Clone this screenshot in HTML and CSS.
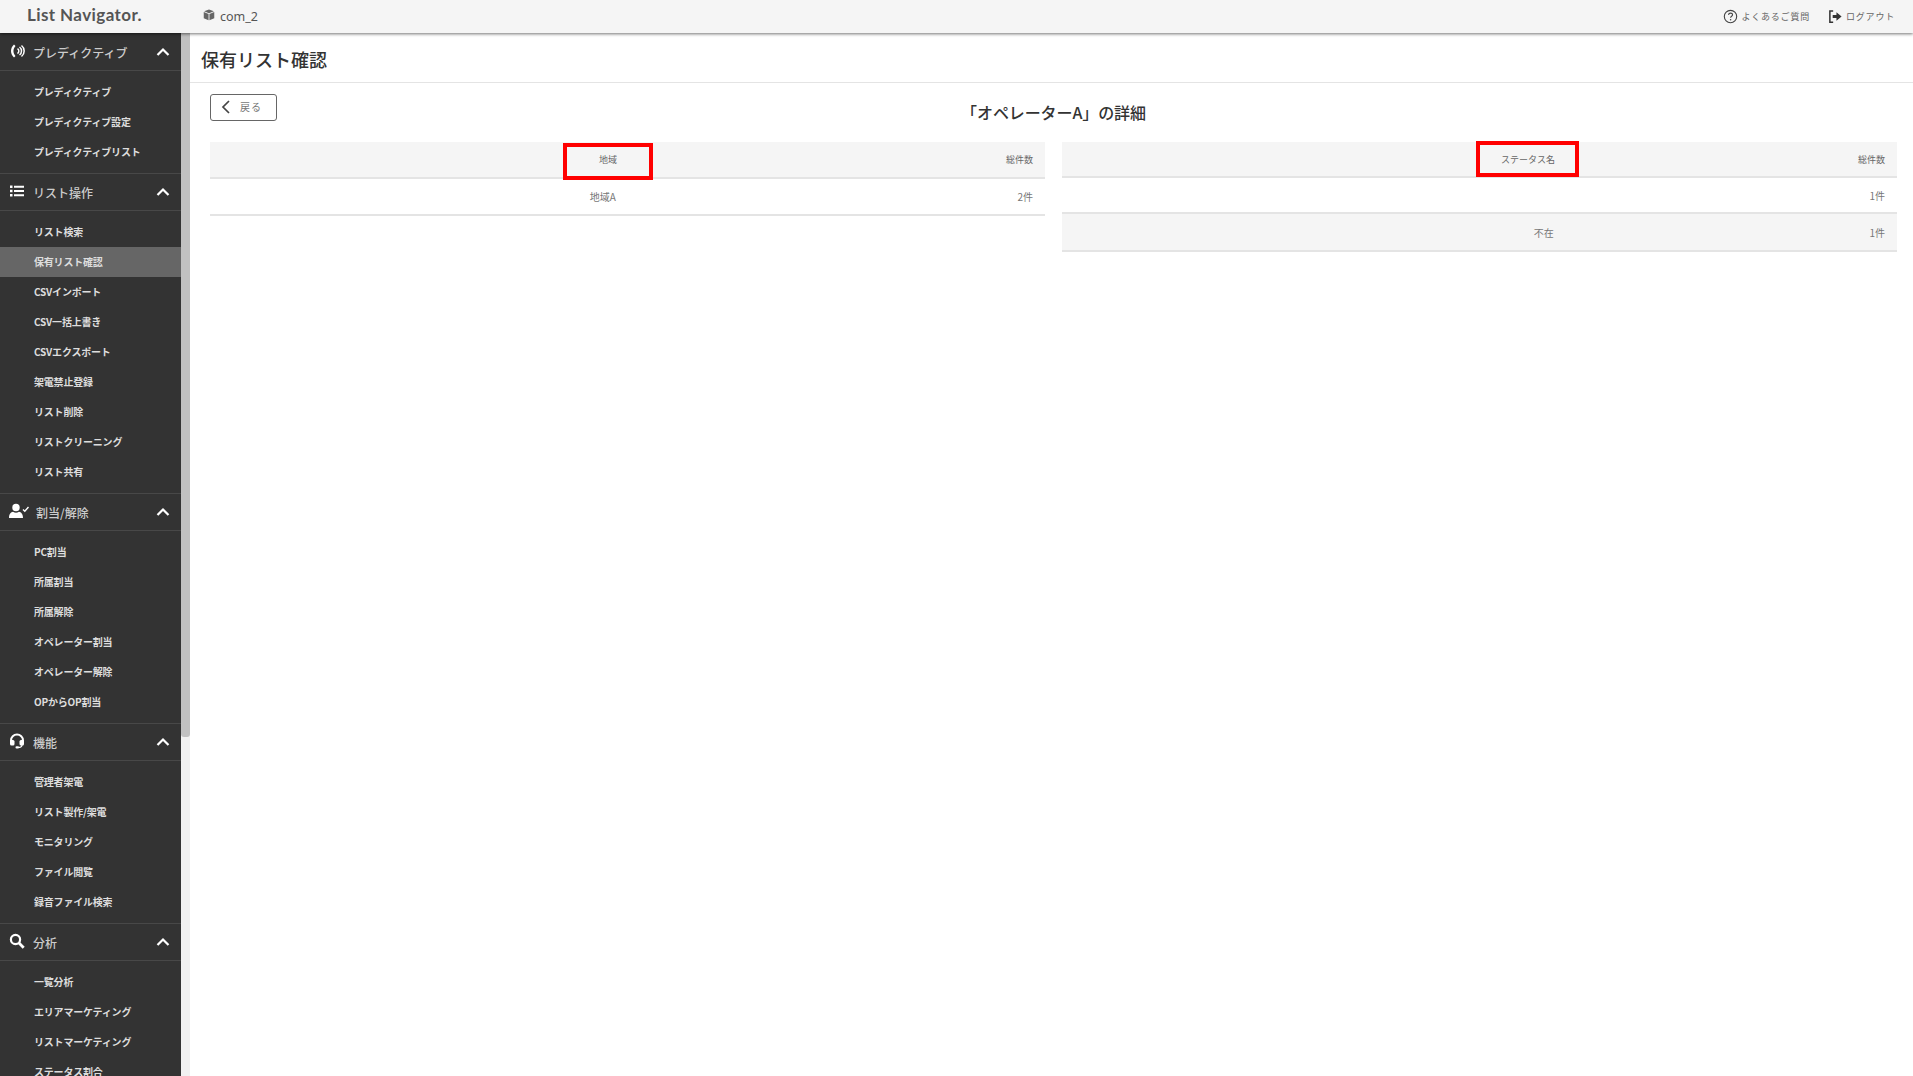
FILE: index.html
```html
<!DOCTYPE html>
<html lang="ja">
<head>
<meta charset="utf-8">
<title>保有リスト確認</title>
<link rel="stylesheet" href="styles.css">
</head>
<body>
<header class="topbar">
  <div class="logo">List Navigator.</div>
  <div class="company">
    <svg class="cube" viewBox="0 0 16 16"><path d="M8 .5 14.500 3 8 5.600 1.500 3zM1 4l6.400 2.600V15L1 12.200zM15 4 8.600 6.600V15l6.400-2.800z"/></svg>
    <span>com_2</span>
  </div>
  <nav class="toplinks">
    <a class="toplink"><svg class="topicon" viewBox="0 0 16 16"><circle cx="8" cy="8" r="6.600" fill="none" stroke="#444" stroke-width="1.200"/><path d="M5.900 6.300C6 5 7 4.400 8.100 4.400c1.200 0 2.100.8 2.100 1.800 0 1.600-2.100 1.500-2.100 3.200" fill="none" stroke="#444" stroke-width="1.200"/><circle cx="8.100" cy="11.400" r=".8" fill="#444"/></svg>よくあるご質問</a>
    <a class="toplink"><svg class="topicon" viewBox="0 0 16 16"><path d="M5.500 2H2v12h3.500" fill="none" stroke="#333" stroke-width="1.600"/><path d="M5 6.500h4V3.500L14.500 8 9 12.500v-3H5z" fill="#333"/></svg>ログアウト</a>
  </nav>
</header>
<div class="shell">
  <aside class="sidebar">
    <div class="sidebar-inner">
      <section class="group">
        <h2 class="group-head"><svg class="gicon" viewBox="0 0 16 16"><path d="M5 1.500C1 5 1 11 5 14.500L6.500 13C3.800 10 3.800 6 6.500 3z" fill="#fff"/><path d="M8.500 5.500a3 3 0 0 1 0 5M10.500 4a5 5 0 0 1 0 8M12.500 2.500a7 7 0 0 1 0 11" fill="none" stroke="#fff" stroke-width="1.500"/></svg><span class="gtitle">プレディクティブ</span><svg class="chev" viewBox="0 0 14 10"><path d="M1.500 8 7 2.500 12.500 8" fill="none" stroke="#fff" stroke-width="2.200"/></svg></h2>
        <ul class="items"><li>プレディクティブ</li><li>プレディクティブ設定</li><li>プレディクティブリスト</li></ul>
      </section>
      <section class="group">
        <h2 class="group-head"><svg class="gicon" viewBox="0 0 16 16"><path d="M1 2.500h2.500v2.600H1zM1 6.700h2.500v2.600H1zM1 10.900h2.500v2.600H1zM5 2.800h10v2H5zM5 7h10v2H5zM5 11.200h10v2H5z" fill="#fff"/></svg><span class="gtitle">リスト操作</span><svg class="chev" viewBox="0 0 14 10"><path d="M1.500 8 7 2.500 12.500 8" fill="none" stroke="#fff" stroke-width="2.200"/></svg></h2>
        <ul class="items"><li>リスト検索</li><li class="active">保有リスト確認</li><li>CSVインポート</li><li>CSV一括上書き</li><li>CSVエクスポート</li><li>架電禁止登録</li><li>リスト削除</li><li>リストクリーニング</li><li>リスト共有</li></ul>
      </section>
      <section class="group">
        <h2 class="group-head"><svg class="gicon gicon-wide" viewBox="0 0 20 16"><circle cx="7" cy="4.500" r="3.700" fill="#fff"/><path d="M0 15c0-4 2-6 4-6.200 2 1.200 4 1.200 6 0 2 .2 4 2.200 4 6.200z" fill="#fff"/><path d="M14 6.500l1.800 1.800L19.500 4" fill="none" stroke="#fff" stroke-width="1.400"/></svg><span class="gtitle">割当/解除</span><svg class="chev" viewBox="0 0 14 10"><path d="M1.500 8 7 2.500 12.500 8" fill="none" stroke="#fff" stroke-width="2.200"/></svg></h2>
        <ul class="items"><li>PC割当</li><li>所属割当</li><li>所属解除</li><li>オペレーター割当</li><li>オペレーター解除</li><li>OPからOP割当</li></ul>
      </section>
      <section class="group">
        <h2 class="group-head"><svg class="gicon" viewBox="0 0 16 16"><path d="M2 9V7.500a6 6 0 0 1 12 0V9" fill="none" stroke="#fff" stroke-width="2"/><rect x="1" y="7" width="4.500" height="5.500" rx="1.500" fill="#fff"/><rect x="10.500" y="7" width="4.500" height="5.500" rx="1.500" fill="#fff"/><path d="M13 12c0 2-2 2.500-4 2.500" fill="none" stroke="#fff" stroke-width="1.200"/><rect x="6.500" y="13.300" width="3.500" height="2.200" rx="1" fill="#fff"/></svg><span class="gtitle">機能</span><svg class="chev" viewBox="0 0 14 10"><path d="M1.500 8 7 2.500 12.500 8" fill="none" stroke="#fff" stroke-width="2.200"/></svg></h2>
        <ul class="items"><li>管理者架電</li><li>リスト製作/架電</li><li>モニタリング</li><li>ファイル閲覧</li><li>録音ファイル検索</li></ul>
      </section>
      <section class="group">
        <h2 class="group-head"><svg class="gicon" viewBox="0 0 16 16"><circle cx="6.500" cy="6.500" r="4.600" fill="none" stroke="#fff" stroke-width="2.200"/><path d="M10 10l4.700 4.700" stroke="#fff" stroke-width="2.800"/></svg><span class="gtitle">分析</span><svg class="chev" viewBox="0 0 14 10"><path d="M1.500 8 7 2.500 12.500 8" fill="none" stroke="#fff" stroke-width="2.200"/></svg></h2>
        <ul class="items"><li>一覧分析</li><li>エリアマーケティング</li><li>リストマーケティング</li><li>ステータス割合</li></ul>
      </section>
    </div>
    <div class="rail"><div class="thumb"></div></div>
  </aside>
  <main class="main">
    <h1 class="page-title">保有リスト確認</h1>
    <div class="content">
      <div class="toolbar">
        <button class="back"><svg class="back-icon" viewBox="0 0 10 14"><path d="M8 1 2 7 8 13" fill="none" stroke="#444" stroke-width="1.700"/></svg><span>戻る</span></button>
      </div>
      <h2 class="detail-title">「オペレーターA」の詳細</h2>
      <div class="tables">
        <div class="table table-left">
          <div class="row head"><div class="cell name"><span>地域</span></div><div class="cell total">総件数</div></div>
          <div class="row"><div class="cell name"><span class="shift-b">地域A</span></div><div class="cell total">2件</div></div>
          <div class="mark mark-left"></div>
        </div>
        <div class="table table-right">
          <div class="row head"><div class="cell name"><span class="shift-c">ステータス名</span></div><div class="cell total">総件数</div></div>
          <div class="row"><div class="cell name"></div><div class="cell total">1件</div></div>
          <div class="row alt"><div class="cell name"><span class="shift-d">不在</span></div><div class="cell total">1件</div></div>
          <div class="mark mark-right"></div>
        </div>
      </div>
    </div>
  </main>
</div>
</body>
</html>
```
FILE: styles.css
```css
* { box-sizing: border-box; }
html, body { margin: 0; height: 100%; overflow: hidden; }
body {
  font-family: "Noto Sans CJK JP", "Noto Sans", sans-serif;
  color: #444;
  background: #fff;
  display: flex;
  flex-direction: column;
}
.topbar {
  flex: none;
  height: 33px;
  background: #f5f5f5;
  display: flex;
  align-items: center;
  box-shadow: 0 1px 3px rgba(0,0,0,.55);
  position: relative;
  z-index: 2;
}
.logo {
  font-family: Lato, sans-serif;
  font-size: 17px;
  font-weight: 700;
  letter-spacing: .4px;
  color: #555;
  margin-left: 27px;
  width: 176px;
  line-height: 30px;
  height: 33px;
}
.company { display: flex; align-items: center; gap: 5px; font-size: 12.5px; color: #555; height: 33px; font-family: "Noto Sans", sans-serif; }
.cube { width: 12px; height: 12px; fill: #666; margin-top: -3px; }
.toplinks { margin-left: auto; display: flex; gap: 18px; margin-right: 18px; }
.toplink { display: flex; align-items: center; gap: 3px; font-size: 9px; letter-spacing: .8px; color: #666; }
.topicon { width: 15px; height: 15px; }
.shell { flex: 1; display: flex; min-height: 0; }
.sidebar {
  flex: none;
  width: 190px;
  display: flex;
  overflow: hidden;
}
.sidebar-inner { flex: none; width: 181px; background: #333; padding-top: 1px; overflow: hidden; }
.rail { flex: none; width: 9px; background: #f1f1f1; }
.thumb { height: 704px; background: #c1c1c1; border-radius: 0 0 3px 3px; }
.group-head {
  margin: 0;
  height: 37px;
  display: flex;
  align-items: center;
  padding: 0 11px 0 9px;
  font-size: 12px;
  font-weight: 500;
  color: #ccc;
  border-bottom: 1px solid #484848;
}
.group + .group .group-head { border-top: 1px solid #484848; height: 38px; }
.group-head .gicon { width: 16px; height: 16px; margin-right: 8px; margin-top: -2px; flex: none; }
.group-head .gicon-wide { width: 20px; margin-right: 7px; }
.gtitle { flex: 1; }
.chev { width: 14px; height: 10px; flex: none; }
.items { list-style: none; margin: 0; padding: 6px 0; }
.items li {
  height: 30px;
  line-height: 30px;
  padding-left: 34px;
  font-size: 10px;
  font-weight: 700;
  letter-spacing: -.2px;
  color: #ddd;
}
.items li.active { background: #666; }
.main { flex: 1; min-width: 0; }
.page-title {
  margin: 0;
  height: 50px;
  line-height: 52px;
  padding-left: 11px;
  font-size: 18px;
  font-weight: 500;
  color: #333;
  border-bottom: 1px solid #e4e4e4;
}
.content { padding: 11px 16px 0 20px; }
.toolbar { height: 27px; }
.back {
  width: 67px;
  height: 27px;
  padding: 0 0 2px 10px;
  background: #fff;
  border: 1px solid #666;
  border-radius: 3px;
  display: flex;
  align-items: center;
  gap: 9px;
  font-family: inherit;
  font-size: 10px;
  letter-spacing: 1px;
  color: #777;
}
.back-icon { width: 10px; height: 14px; }
.detail-title {
  margin: -24px 0 0;
  height: 31px;
  line-height: 30px;
  text-align: center;
  font-size: 16px;
  font-weight: 500;
  letter-spacing: -.1px;
  color: #333;
}
.tables { display: flex; gap: 17px; align-items: flex-start; margin-top: 14px; }
.table { flex: 1; position: relative; }
.row {
  display: flex;
  align-items: center;
  border-bottom: 2px solid #e4e4e4;
  font-size: 10px;
  color: #777;
}
.row.head { background: #f5f5f5; font-size: 9px; color: #666; }
.row.alt { background: #f5f5f5; }
.table-left .row { height: 37px; }
.table-right .row { height: 36px; }
.table-right .row.alt { height: 38px; }
.cell.name { flex: 1; text-align: center; }
.cell.total { padding-right: 12px; text-align: right; }
.shift-b { margin-left: -22px; }
.shift-c { margin-left: 136px; }
.shift-d { margin-left: 156px; }
.mark { position: absolute; border: 4px solid #f00; }
.mark-left { left: 353px; top: 1px; width: 90px; height: 37px; }
.mark-right { left: 414px; top: -1px; width: 103px; height: 36px; }
```
